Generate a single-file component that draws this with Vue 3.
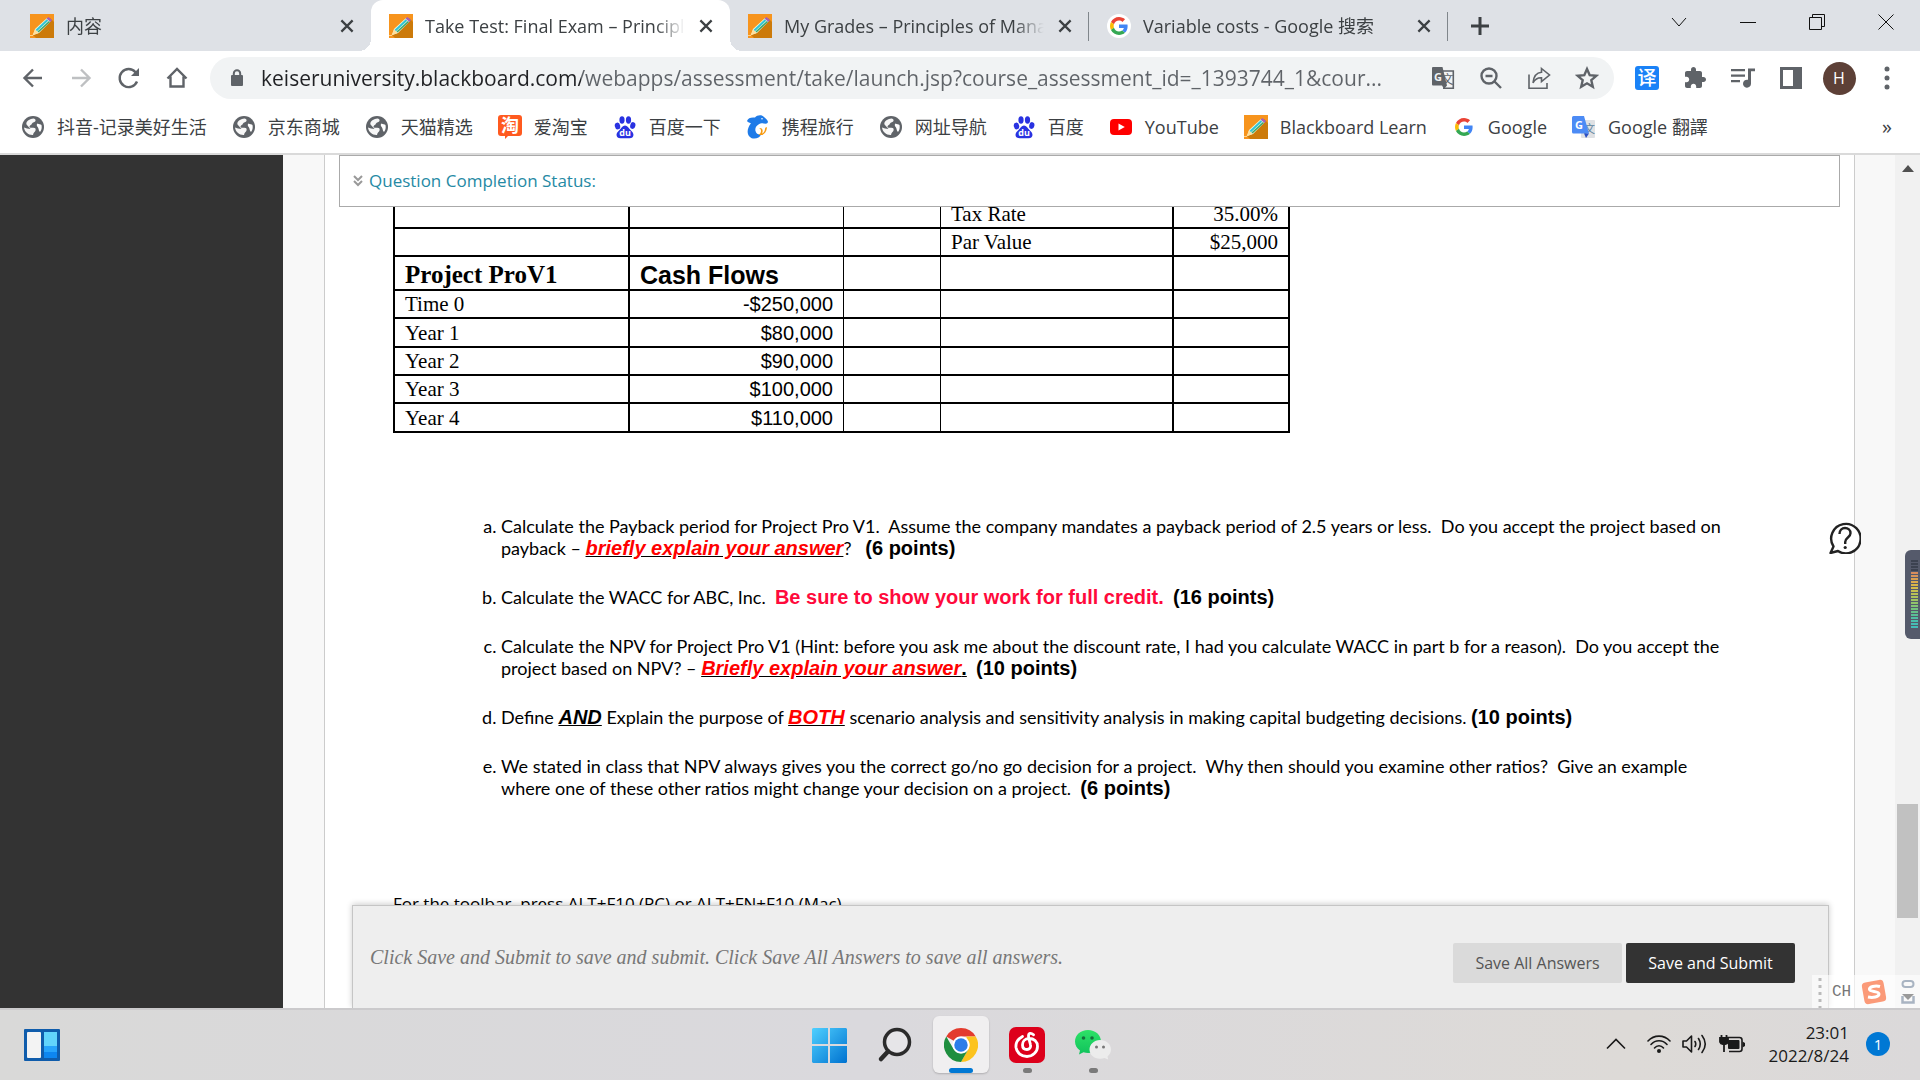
<script setup>
import { ref } from 'vue'

const address = ref(
  'keiseruniversity.blackboard.com/webapps/assessment/take/launch.jsp?course_assessment_id=_1393744_1&cour...'
)

const tabs = [
  { icon: 'pencil', title: '内容', active: false },
  { icon: 'pencil', title: 'Take Test: Final Exam – Principles', active: true },
  { icon: 'pencil', title: 'My Grades – Principles of Managerial', active: false, divider: true },
  { icon: 'google', disc: true, title: 'Variable costs - Google 搜索', active: false, divider: true },
]

const bookmarks = [
  { icon: 'globe', title: '抖音-记录美好生活' },
  { icon: 'globe', title: '京东商城' },
  { icon: 'globe', title: '天猫精选' },
  { icon: 'taobao', title: '爱淘宝' },
  { icon: 'baidu', title: '百度一下' },
  { icon: 'ctrip', title: '携程旅行' },
  { icon: 'globe', title: '网址导航' },
  { icon: 'baidu', title: '百度' },
  { icon: 'youtube', title: 'YouTube' },
  { icon: 'pencil', title: 'Blackboard Learn' },
  { icon: 'google', title: 'Google' },
  { icon: 'translate', title: 'Google 翻譯' },
]

const years = [
  { label: 'Time 0', flow: '-$250,000' },
  { label: 'Year 1', flow: '$80,000', tall: true },
  { label: 'Year 2', flow: '$90,000' },
  { label: 'Year 3', flow: '$100,000' },
  { label: 'Year 4', flow: '$110,000', tall: true },
]

const meterColors = [
  '#3c4250', '#3c4250', '#3c4250', '#3c4250', '#d88d5c', '#d8955a', '#d9a052', '#dbab4c',
  '#d8b548', '#d3bc4a', '#c6bf50', '#b9c156', '#adc25c', '#a0c363', '#92c36b', '#83c374',
  '#74c27e', '#66c189', '#5ac095', '#50bfa2', '#4abeac', '#46bdb4', '#44bcb8',
]
</script>

<template>
  <svg class="sprite" aria-hidden="true">
    <symbol id="pencil" viewBox="0 0 24 24">
      <rect width="24" height="24" fill="#f7941d" />
      <path d="M20 4L24 8V24H6L3 21z" fill="#cc7a0a" />
      <path d="M3 21L5 15L17 4L21 7L9 19z" fill="#e9f7e0" />
      <path d="M6.300 16.500L17.500 6" stroke="#2fc4d8" stroke-width="2" />
      <path d="M8 18L19.500 7.500" stroke="#3fa66b" stroke-width="1.600" />
      <path d="M16.500 4.500L18.500 3L22 6L20.500 8z" fill="#a561b8" />
      <path d="M2.500 21.500L5 15.500L8.500 19z" fill="#ffdf9c" />
      <path d="M0 21.500H3" stroke="#ffd38a" />
    </symbol>
    <symbol id="google" viewBox="0 0 48 48">
      <path fill="#EA4335" d="M24 9.500c3.540 0 6.710 1.220 9.210 3.600l6.850-6.850C35.900 2.380 30.470 0 24 0 14.620 0 6.510 5.380 2.560 13.220l7.980 6.190C12.430 13.720 17.740 9.500 24 9.500z" />
      <path fill="#4285F4" d="M46.980 24.550c0-1.570-.15-3.090-.38-4.550H24v9.020h12.940c-.58 2.960-2.260 5.480-4.780 7.180l7.730 6c4.510-4.180 7.090-10.360 7.090-17.650z" />
      <path fill="#FBBC05" d="M10.530 28.590c-.48-1.450-.76-2.990-.76-4.590s.27-3.140.76-4.590l-7.980-6.190C.92 16.460 0 20.120 0 24c0 3.880.92 7.540 2.560 10.780l7.970-6.190z" />
      <path fill="#34A853" d="M24 48c6.480 0 11.930-2.130 15.890-5.810l-7.730-6c-2.150 1.450-4.920 2.300-8.160 2.300-6.260 0-11.570-4.220-13.470-9.910l-7.980 6.190C6.510 42.620 14.620 48 24 48z" />
    </symbol>
    <symbol id="globe" viewBox="0 0 24 24">
      <circle cx="12" cy="12" r="11" fill="#5f6368" />
      <path d="M10 4c3-1.500 5 0 4.500 2-.5 1.600-3 1-3.500 2.500s-2 1.500-2.500 3c-.2 1.200 1 1.500 3 1.300 3-.3 3.500 1 3 2.700-.4 1.500-2 1.700-2.500 4.500-4.500.3-8.500-3-9-7.500L6 13.500 9.500 14 5.500 9.500C4.800 7 7 5 10 4z" fill="#fff" opacity=".95" />
      <path d="M16.500 8.500c1.500.8 3 .5 4 1.500.6 3 0 5-1.500 7-1.500-1-1-3-2-4.500s-2-2.500-.5-4z" fill="#fff" />
    </symbol>
    <symbol id="taobao" viewBox="0 0 24 24">
      <path d="M3 0H21a3 3 0 0 1 3 3V18a3 3 0 0 1-3 3H10L7 24V21H3a3 3 0 0 1-3-3V3a3 3 0 0 1 3-3z" fill="#ff5a1f" />
      <text x="12" y="17" text-anchor="middle" class="cjk-glyph" font-size="18" font-weight="700" fill="#fff">淘</text>
    </symbol>
    <symbol id="baidu" viewBox="0 0 24 24">
      <g fill="#2932e1">
        <ellipse cx="4.500" cy="11" rx="2.700" ry="3.400" transform="rotate(-12 4.500 11)" />
        <ellipse cx="9" cy="5" rx="2.600" ry="3.700" />
        <ellipse cx="15.500" cy="5" rx="2.600" ry="3.700" />
        <ellipse cx="19.800" cy="10.500" rx="2.600" ry="3.400" transform="rotate(12 19.800 10.500)" />
        <path d="M12 10.500c2.500 0 3.500 2.500 5.500 4.500s3.500 3.500 2.800 6c-.7 2.600-4 2.300-8.300 2.300s-7.600.3-8.300-2.300c-.7-2.500.8-4 2.800-6s3-4.500 5.500-4.500z" />
      </g>
      <text x="12" y="21" text-anchor="middle" class="latin-glyph" font-size="9" font-weight="700" fill="#fff">du</text>
    </symbol>
    <symbol id="ctrip" viewBox="0 0 24 24">
      <path d="M1 6C2 3 5 2 9 2.500 11 0 16-.5 18 2c2.500 2.500 5 4 3.500 6-1.500 1.700-4 0-6 .3C12 9 8.500 12 9.500 16c.6 2.600 3 4 5.500 3.500-1 3-4.500 4.500-8 4C2 22.500.5 17 2.500 12.500 3 11 4 9.500 5 8.500 4 7.500 2 7.500 1 6z" fill="#1f7be8" />
      <path d="M13 13c3 1 2.500 5.500-.5 6.500 3.500 2 8-1 8.500-7-1-.5-1.800.2-2 1.500-.2 2.500-1.500 4-3 4.500 1.500-3 .5-6-3-5.500z" fill="#f79a10" />
      <circle cx="16" cy="3.800" r=".8" fill="#fff" />
    </symbol>
    <symbol id="youtube" viewBox="0 0 24 24">
      <rect x="1" y="4" width="22" height="16" rx="4" fill="#f00" />
      <path d="M9.500 8.500V15.500L15.800 12z" fill="#fff" />
    </symbol>
    <symbol id="translate" viewBox="0 0 24 24">
      <rect x="9" y="5" width="14" height="18" rx="1" fill="#dfe1e4" />
      <text x="17.500" y="18" text-anchor="middle" class="cjk-glyph" font-size="11" fill="#5b7f9c">文</text>
      <path d="M1.500 1H12l5 17.500H1.500A1.500 1.500 0 0 1 0 17V2.500A1.500 1.500 0 0 1 1.500 1z" fill="#4c8bf5" />
      <path d="M12 18.500H17L14 23z" fill="#2a4fc4" />
      <text x="7" y="14" text-anchor="middle" class="latin-glyph" font-size="11" font-weight="700" fill="#fff">G</text>
    </symbol>
    <symbol id="close" viewBox="0 0 16 16">
      <path d="M3 3L13 13M13 3L3 13" stroke="#3c4043" stroke-width="2" fill="none" />
    </symbol>
  </svg>

  <div class="screen">
    <header class="browser">
      <div class="tabstrip">
        <div class="tabs" role="tablist">
          <div v-for="t in tabs" :key="t.title" class="tab" :class="{ active: t.active, divided: t.divider }" role="tab" :aria-selected="t.active">
            <span class="favicon" :class="{ disc: t.disc }"><svg><use :href="'#' + t.icon" /></svg></span>
            <span class="tab-title">{{ t.title }}</span>
            <button class="tab-close" aria-label="Close tab"><svg><use href="#close" /></svg></button>
          </div>
        </div>
        <button class="new-tab" aria-label="New tab">
          <svg width="20" height="20" viewBox="0 0 20 20"><path d="M10 1V19M1 10H19" stroke="#3c4043" stroke-width="3" /></svg>
        </button>
        <div class="window-controls">
          <button aria-label="Search tabs"><svg width="16" height="16" viewBox="0 0 16 16"><path d="M1 4L8 12L15 4" /></svg></button>
          <button aria-label="Minimize"><svg width="16" height="16" viewBox="0 0 16 16"><path d="M0 8.500H16" /></svg></button>
          <button aria-label="Restore"><svg width="16" height="16" viewBox="0 0 16 16"><path d="M.5 3.500H12.500V15.500H.5zM3.500 3.500V.5H15.500V12.500H12.500" /></svg></button>
          <button aria-label="Close"><svg width="16" height="16" viewBox="0 0 16 16"><path d="M.5 .5L15.500 15.500M15.500 .5L.5 15.500" /></svg></button>
        </div>
      </div>

      <div class="toolbar">
        <button class="tool" aria-label="Back"><svg viewBox="0 0 24 24"><path class="line" d="M21 12H4M12 3.500L3.500 12L12 20.500" /></svg></button>
        <button class="tool dim" aria-label="Forward"><svg viewBox="0 0 24 24"><path class="line" d="M3 12H20M12 3.500L20.500 12L12 20.500" /></svg></button>
        <button class="tool" aria-label="Reload"><svg viewBox="0 0 24 24"><path class="line" d="M20 15.500A9 9 0 1 1 18.500 6.200L20.500 8.500" /><path d="M22 2V10H14z" /></svg></button>
        <button class="tool" aria-label="Home"><svg viewBox="0 0 24 24"><path class="line" d="M2.500 12.500L12 3L21.500 12.500M5.500 10.500V20.500H18.500V10.500" /></svg></button>
        <form class="omnibox" @submit.prevent>
          <svg class="lock" width="14" height="18" viewBox="0 0 14 18"><rect x="1" y="6" width="12" height="11" rx="1" fill="#5f6368" /><path d="M3.800 6.500V4.500a3.200 3.200 0 0 1 6.400 0V6.500" fill="none" stroke="#5f6368" stroke-width="2" /></svg>
          <input v-model="address" class="address" type="text" aria-label="Address" spellcheck="false">
          <button type="button" class="tool" aria-label="Translate this page">
            <svg viewBox="0 0 24 24"><path class="thin" d="M12 5H22.300V22.300H12" /><text x="16.500" y="18" text-anchor="middle" class="cjk-glyph" font-size="12">文</text><path d="M2 1H11.500L16 19.500H2A1 1 0 0 1 1 18.500V2A1 1 0 0 1 2 1zM11 19.500H16L13 23z" /><text x="7" y="14.500" text-anchor="middle" class="latin-glyph" font-size="11" font-weight="700" fill="#f1f3f4">G</text></svg>
          </button>
          <button type="button" class="tool" aria-label="Zoom"><svg viewBox="0 0 24 24"><circle class="line" cx="10" cy="10" r="7.500" /><path class="line" d="M15.500 15.500L22 22M6.500 10H13.500" /></svg></button>
          <button type="button" class="tool" aria-label="Share"><svg viewBox="0 0 24 24"><path class="thin" d="M2 8.500V22.300H20V17M14.500 2.500L22.500 9L14.500 15.500V11.800C10.500 11.500 8 13.500 6 16.800 6.500 11.500 9 6.800 14.500 6.300z" /></svg></button>
          <button type="button" class="tool" aria-label="Bookmark"><svg viewBox="0 0 24 24"><path class="line" d="M12 3L14.700 9.200L21.300 9.800L16.300 14.200L17.800 20.800L12 17.300L6.200 20.800L7.700 14.200L2.700 9.800L9.300 9.200z" /></svg></button>
        </form>
        <button class="tool ext" aria-label="Translator extension"><svg viewBox="0 0 24 24"><rect width="24" height="24" rx="3" fill="#1a82f7" /><text x="12" y="19" text-anchor="middle" class="cjk-glyph" font-size="19" font-weight="500" fill="#fff">译</text></svg></button>
        <button class="tool" aria-label="Extensions"><svg viewBox="0 0 24 24"><path d="M20.500 11H19V7c0-1.100-.9-2-2-2h-4V3.500C13 2.120 11.880 1 10.500 1S8 2.120 8 3.500V5H4c-1.100 0-1.990.9-1.990 2v3.800H3.500c1.490 0 2.700 1.210 2.700 2.700s-1.210 2.700-2.700 2.700H2V20c0 1.100.9 2 2 2h3.800v-1.500c0-1.490 1.210-2.700 2.700-2.700 1.490 0 2.700 1.210 2.700 2.700V22H17c1.100 0 2-.9 2-2v-4h1.500c1.380 0 2.500-1.120 2.500-2.500S21.880 11 20.500 11z" /></svg></button>
        <button class="tool" aria-label="Media"><svg viewBox="0 0 24 24"><path d="M0 3H14V5.300H0zM0 8.500H14V10.800H0zM0 14H9V16.300H0zM17 2.500H24V5.300H20V17.500A4 4 0 1 1 17 13.800z" /></svg></button>
        <button class="tool" aria-label="Side panel"><svg viewBox="0 0 24 24"><path fill-rule="evenodd" d="M1 1H23V23H1zM4 4V20H14V4z" /></svg></button>
        <button class="tool" aria-label="Profile"><span class="avatar">H</span></button>
        <button class="tool" aria-label="Menu"><svg viewBox="0 0 24 24"><circle cx="12" cy="3" r="2.500" /><circle cx="12" cy="12" r="2.500" /><circle cx="12" cy="21" r="2.500" /></svg></button>
      </div>

      <nav class="bookmarks">
        <a v-for="(b, i) in bookmarks" :key="i" href="#" class="bookmark" :class="b.icon">
          <svg><use :href="'#' + b.icon" /></svg>{{ b.title }}
        </a>
        <button class="more" aria-label="More bookmarks">»</button>
      </nav>
    </header>

    <div class="viewport">
      <div class="rail"></div>
      <main class="page">
        <div class="sheet">
          <section class="status">
            <button class="status-toggle">
              <svg width="10" height="12" viewBox="0 0 10 12"><path d="M1 1L5 5L9 1M1 6L5 10L9 6" fill="none" stroke="#999" stroke-width="2" /></svg>
              Question Completion Status:
            </button>
          </section>

          <div class="question">
            <table class="data">
              <colgroup><col class="c1"><col class="c2"><col class="c3"><col class="c4"><col class="c5"></colgroup>
              <tbody>
                <tr><td></td><td></td><td></td><td>Tax Rate</td><td class="num">35.00%</td></tr>
                <tr><td></td><td></td><td></td><td>Par Value</td><td class="num">$25,000</td></tr>
                <tr class="head"><th scope="col">Project ProV1</th><th scope="col" class="sans">Cash Flows</th><td></td><td></td><td></td></tr>
                <tr v-for="y in years" :key="y.label" :class="{ tall: y.tall }">
                  <td>{{ y.label }}</td><td class="num sans">{{ y.flow }}</td><td></td><td></td><td></td>
                </tr>
              </tbody>
            </table>

            <ol class="parts">
              <li>Calculate the Payback period for Project Pro V1.&nbsp; Assume the company mandates a payback period of 2.5 years or less.&nbsp; Do you accept the project based on<br>payback – <u><em>briefly explain your answer</em></u>?&nbsp;&nbsp; <strong>(6 points)</strong></li>
              <li>Calculate the WACC for ABC, Inc.&nbsp; <strong class="credit">Be sure to show your work for full credit.</strong>&nbsp; <strong>(16 points)</strong></li>
              <li>Calculate the NPV for Project Pro V1 (Hint: before you ask me about the discount rate, I had you calculate WACC in part b for a reason).&nbsp; Do you accept the<br>project based on NPV? – <u><em>Briefly explain your answer</em><strong>.</strong></u>&nbsp; <strong>(10 points)</strong></li>
              <li>Define <u><em class="dark">AND</em></u> Explain the purpose of <u><em>BOTH</em></u> scenario analysis and sensitivity analysis in making capital budgeting decisions. <strong>(10 points)</strong></li>
              <li>We stated in class that NPV always gives you the correct go/no go decision for a project.&nbsp; Why then should you examine other ratios?&nbsp; Give an example<br>where one of these other ratios might change your decision on a project.&nbsp; <strong>(6 points)</strong></li>
            </ol>

            <p class="hint">For the toolbar, press ALT+F10 (PC) or ALT+FN+F10 (Mac).</p>
          </div>

          <section class="submit-bar">
            <p>Click Save and Submit to save and submit. Click Save All Answers to save all answers.</p>
            <div class="actions">
              <button class="save">Save All Answers</button>
              <button class="submit">Save and Submit</button>
            </div>
          </section>
        </div>
      </main>
      <div class="scrollbar">
        <svg class="arrow" width="12" height="7" viewBox="0 0 12 7"><path d="M0 7L6 0L12 7z" fill="#505050" /></svg>
        <div class="thumb"></div>
      </div>

      <button class="help" aria-label="Help">
        <svg width="32" height="32" viewBox="0 0 32 32"><path d="M4.500 24.500A14.700 14.700 0 1 1 9 29L1.500 31z" fill="#fff" stroke="#222" stroke-width="2.400" stroke-linejoin="round" /><path d="M10.500 12C10.500 8 13 6 16 6s5.500 2 5.500 5.200C21.500 15.500 16.200 15.500 16.200 20V22" fill="none" stroke="#222" stroke-width="2.400" /><circle cx="16.200" cy="25.500" r="1.600" fill="#222" /></svg>
      </button>
      <div class="meter"><i v-for="(c, i) in meterColors" :key="i" :style="{ background: c }"></i></div>
      <div class="ime">
        <svg width="4" height="32" viewBox="0 0 4 32"><path d="M2 2V32" stroke="#bbb" stroke-width="3" stroke-dasharray="3 4" /></svg>
        <span>CH</span>
        <svg width="26" height="26" viewBox="0 0 26 26"><rect x="2" y="2" width="22" height="22" rx="4" fill="#fb9a78" transform="rotate(-10 13 13)" /><path d="M19 7.500C14 6 8 8 8.500 10.500S18 12 18 15 12 19 7 18" fill="none" stroke="#fff" stroke-width="3" /></svg>
        <svg class="keys" width="14" height="26" viewBox="0 0 14 26"><rect x="1.500" y="2" width="11" height="6" rx="3" fill="none" stroke="#a9b4c2" stroke-width="2" /><path d="M1.500 17V23.500H12.500V17" fill="none" stroke="#a9b4c2" stroke-width="2.500" /><path d="M1 15H13L7 21z" fill="#999" /></svg>
      </div>
    </div>

    <footer class="taskbar">
      <button class="widgets" aria-label="Widgets">
        <svg width="36" height="32" viewBox="0 0 36 32"><rect width="36" height="32" rx="1" fill="#0f5cab" /><rect x="3" y="3" width="14" height="26" rx="1" fill="#f3f3f3" /><path d="M20 3H33V17H20z" fill="#62d4fb" /><path d="M20 17H33V23H20z" fill="#27a4fb" /><path d="M20 23H33V29H20z" fill="#0d86f0" /></svg>
      </button>
      <div class="apps">
        <button class="app" aria-label="Start">
          <svg width="36" height="36" viewBox="0 0 36 36">
            <defs><linearGradient id="winGrad" x1="0" y1="0" x2="1" y2="1"><stop offset="0" stop-color="#4fd0ff" /><stop offset="1" stop-color="#0072d0" /></linearGradient></defs>
            <path d="M2 1H17V17H1V2zM19 1H35L36 2V17H19zM1 19H17V36H2L1 35zM19 19H36V35L35 36H19z" fill="url(#winGrad)" />
          </svg>
        </button>
        <button class="app" aria-label="Search"><svg width="36" height="36" viewBox="0 0 36 36"><circle cx="20" cy="15" r="12.500" fill="#e6e5e8" stroke="#2b2b2b" stroke-width="3.500" /><path d="M11 24.500L4 32" stroke="#2b2b2b" stroke-width="4.500" stroke-linecap="round" /></svg></button>
        <button class="app open" aria-label="Chrome">
          <svg width="34" height="34" viewBox="0 0 48 48"><path d="M24 0A24 24 0 0 1 44.800 12H24A12 12 0 0 0 13.600 18L3.200 12A24 24 0 0 1 24 0z" fill="#e33b2e" /><path d="M44.800 12A24 24 0 0 1 24 48L34.400 30A12 12 0 0 0 34.400 18L31 12z" fill="#fcc31e" /><path d="M3.200 12A24 24 0 0 0 24 48L34.400 30A12 12 0 0 1 13.600 30z" fill="#1e8e3e" /><circle cx="24" cy="24" r="12" fill="#fff" /><circle cx="24" cy="24" r="9.500" fill="#2b7de9" /></svg>
        </button>
        <button class="app running" aria-label="Music">
          <svg width="36" height="36" viewBox="0 0 36 36"><rect width="36" height="36" rx="7" fill="#dd001b" /><path d="M13.500 9.500C9 12 6.500 16 7 20.500 7.800 26 12.500 29.500 18 29.500S28.500 25 28.500 19.500C28.500 14.500 25 11.500 20 11.500 15.500 11.500 13.500 15 13.500 18S15.500 22.500 18 22.500 22 20.500 21.500 18C21 15 19.500 12 19.500 9S22 5.500 24.500 7.800" fill="none" stroke="#fff" stroke-width="2.800" stroke-linecap="round" /></svg>
        </button>
        <button class="app running" aria-label="Chat">
          <svg width="38" height="36" viewBox="0 0 38 36">
            <defs><linearGradient id="chatGrad" x1="0" y1="0" x2="0" y2="1"><stop offset="0" stop-color="#2ee267" /><stop offset="1" stop-color="#10c25c" /></linearGradient></defs>
            <path d="M14 3C21.500 3 27 8 27 14.500S21.500 26 14 26C12.500 26 11 25.800 9.500 25.300L5 27.500 6 23.500C3 21.500 1 18.500 1 14.500 1 8 6.500 3 14 3z" fill="url(#chatGrad)" /><path d="M26 13C32 13 37 17 37 22.500 37 25.500 35.500 27.800 33.500 29.500L34.200 32.500 30.500 31C29 31.500 27.600 31.800 26 31.800 20 31.800 15.500 27.500 15.500 22.500S20 13 26 13z" fill="#ececec" /><circle cx="9.500" cy="11" r="1.800" fill="#15713c" /><circle cx="18" cy="11" r="1.800" fill="#15713c" /><circle cx="22.500" cy="20" r="1.500" fill="#777" /><circle cx="29.500" cy="20" r="1.500" fill="#777" />
          </svg>
        </button>
      </div>
      <div class="tray">
        <svg class="up" width="20" height="12" viewBox="0 0 20 12"><path d="M1 10.500L10 1.500L19 10.500" fill="none" stroke="#1a1a1a" stroke-width="1.600" /></svg>
        <svg width="24" height="20" viewBox="0 0 24 20"><g fill="none" stroke="#1a1a1a" stroke-width="1.600" stroke-linecap="round"><path d="M1 7C7 .5 17 .5 23 7" /><path d="M4 10.500C8.500 5.500 15.500 5.500 20 10.500" /><path d="M7.500 14C10 11 14 11 16.500 14" /></g><circle cx="12" cy="17" r="2" fill="#1a1a1a" /></svg>
        <svg width="26" height="20" viewBox="0 0 26 20"><g fill="none" stroke="#1a1a1a" stroke-width="1.600" stroke-linecap="round" stroke-linejoin="round"><path d="M1 7H4.500L9.500 2V18L4.500 13H1z" /><path d="M13 7.500Q14.500 10 13 12.500M16.500 4.500Q20 10 16.500 15.500M20 1.500Q26.500 10 20 18.500" /></g></svg>
        <svg width="26" height="20" viewBox="0 0 26 20"><path d="M8 3.500H20.500A2.500 2.500 0 0 1 23 6V15A2.500 2.500 0 0 1 20.500 17.500H10" fill="none" stroke="#1a1a1a" stroke-width="1.600" /><rect x="9" y="6" width="11.500" height="9" rx="1" fill="#1a1a1a" /><path d="M23.500 7.500L26 9V12L23.500 13.500z" fill="#1a1a1a" /><path d="M1 4H9V8A3 3 0 0 1 6 10H4A3 3 0 0 1 1 8zM2.500 1V4M7.500 1V4M5 10V18" fill="#1a1a1a" stroke="#1a1a1a" stroke-width="1.800" /></svg>
        <div class="clock"><time>23:01</time><time>2022/8/24</time></div>
        <span class="badge">1</span>
      </div>
    </footer>
  </div>
</template>

<style>
body {
  margin: 0;
  overflow: hidden;
}
</style>

<style scoped>
.screen {
  display: flex;
  flex-direction: column;
  height: 100vh;
  font-family: 'Open Sans', 'Noto Sans CJK SC', sans-serif;
  background: #fff;
}
button {
  padding: 0;
  border: 0;
  background: none;
  font: inherit;
  color: inherit;
}
svg {
  display: block;
  flex: none;
}
svg.sprite {
  display: none;
}
.cjk-glyph {
  font-family: 'Noto Sans CJK SC', sans-serif;
}
.latin-glyph {
  font-family: 'Open Sans', sans-serif;
}

/* Browser frame */
.browser {
  flex: none;
  border-bottom: 2px solid #dadada;
  color: #3c4043;
}
.tabstrip {
  display: flex;
  height: 51px;
  padding-left: 12px;
  background: #dee1e6;
}
.tabs {
  display: flex;
}
.tab {
  box-sizing: border-box;
  position: relative;
  display: flex;
  align-items: center;
  width: 359px;
  padding: 0 15px 0 18px;
  font-size: 18px;
}
.tab.divided::after {
  content: '';
  position: absolute;
  right: 0;
  top: 12px;
  width: 1px;
  height: 29px;
  background: #80868b;
}
.tab.active {
  background: #fff;
  border-radius: 12px 12px 0 0;
}
.tab.active::before,
.tab.active::after {
  content: '';
  position: absolute;
  bottom: 0;
  width: 12px;
  height: 12px;
}
.tab.active::before {
  left: -12px;
  background: radial-gradient(circle at 0 0, transparent 12px, #fff 12px);
}
.tab.active::after {
  right: -12px;
  background: radial-gradient(circle at 100% 0, transparent 12px, #fff 12px);
}
.favicon {
  flex: none;
  display: grid;
  place-items: center;
  width: 24px;
  height: 24px;
}
.favicon svg {
  width: 24px;
  height: 24px;
}
.favicon.disc {
  border-radius: 50%;
  background: #fff;
}
.favicon.disc svg {
  width: 18px;
  height: 18px;
}
.tab-title {
  flex: 1;
  margin: 0 12px;
  overflow: hidden;
  white-space: nowrap;
  line-height: 28px;
  mask-image: linear-gradient(90deg, #000 calc(100% - 30px), transparent);
}
.tab-close svg {
  width: 18px;
  height: 18px;
}
.new-tab {
  margin-left: 22px;
}
.window-controls {
  display: flex;
  height: 44px;
  margin-left: auto;
}
.window-controls button {
  display: grid;
  place-items: center;
  width: 69px;
}
.window-controls path {
  fill: none;
  stroke: #111;
}
.toolbar {
  display: flex;
  align-items: center;
  height: 54px;
  padding: 0 9px;
}
.tool {
  flex: none;
  display: grid;
  place-items: center;
  width: 48px;
  height: 42px;
}
.tool svg {
  width: 24px;
  height: 24px;
  fill: #5f6368;
}
.tool .line,
.tool .thin {
  fill: none;
  stroke: #5f6368;
  stroke-width: 2.4;
}
.tool .thin {
  stroke-width: 1.6;
}
.tool.dim {
  opacity: 0.4;
}
.omnibox {
  flex: 1;
  display: flex;
  align-items: center;
  height: 42px;
  margin: 0 9px;
  padding: 0 3px 0 20px;
  border-radius: 21px;
  background: #f1f3f4;
}
.lock {
  margin-right: 17px;
}
.address {
  flex: 1;
  min-width: 0;
  padding: 0;
  border: 0;
  outline: 0;
  font-family: inherit;
  font-size: 21px;
  line-height: 30px;
  color: transparent;
  background: linear-gradient(90deg, #202124 320px, #5f6368 320px) text;
}
.avatar {
  display: grid;
  place-items: center;
  width: 33px;
  height: 33px;
  border-radius: 50%;
  background: #5d4037;
  color: #fff;
  font-size: 16px;
}
.bookmarks {
  box-sizing: border-box;
  display: flex;
  align-items: center;
  gap: 25px;
  height: 48px;
  padding: 0 28px 4px 21px;
}
.bookmark {
  display: flex;
  align-items: center;
  gap: 12px;
  font-size: 18px;
  line-height: 28px;
  white-space: nowrap;
  color: #3c4043;
  text-decoration: none;
}
.bookmark svg {
  width: 24px;
  height: 24px;
}
.bookmark.google svg {
  width: 18px;
  height: 18px;
  padding: 3px;
}
.more {
  margin-left: auto;
  font-size: 20px;
  line-height: 28px;
}

/* Page */
.viewport {
  position: relative;
  flex: 1;
  min-height: 0;
  display: flex;
  overflow: hidden;
}
.rail {
  flex: none;
  width: 283px;
  background: #333;
}
.page {
  flex: 1;
  min-width: 0;
  padding: 0 40px 0 41px;
  background: #f8f8f8;
}
.sheet {
  box-sizing: border-box;
  display: flex;
  flex-direction: column;
  height: 100%;
  padding: 0 14px;
  border: solid #ccc;
  border-width: 0 1px;
  background: #fff;
}
.status {
  box-sizing: border-box;
  flex: none;
  height: 52px;
  padding: 0 13px;
  border: 1px solid #aaa;
  display: flex;
  align-items: center;
}
.status-toggle {
  display: flex;
  align-items: center;
  gap: 6px;
  font-size: 17px;
  line-height: 24px;
  color: #2589a4;
}
.question {
  flex: 1;
  min-height: 0;
  overflow: hidden;
  display: flex;
  flex-direction: column;
  padding-left: 54px;
}
.data {
  flex: none;
  align-self: flex-start;
  width: 897px;
  table-layout: fixed;
  border-spacing: 0;
  border-left: 2px solid #000;
  margin-top: -6px;
  font: 21px/24px 'Liberation Serif', serif;
}
.c1 { width: 235px; }
.c2 { width: 214px; }
.c3 { width: 97px; }
.c4 { width: 233px; }
.c5 { width: 116px; }
.data td,
.data th {
  box-sizing: border-box;
  height: 28px;
  padding: 0 10px;
  border: solid #000;
  border-width: 0 2px 2px 0;
  text-align: left;
  white-space: nowrap;
}
.data td:nth-child(2),
.data th:nth-child(2),
.data td:nth-child(3) {
  border-right-width: 1px;
}
.data .head > * {
  height: 34px;
  padding-top: 4px;
  font-size: 25px;
}
.data .tall td {
  height: 29px;
}
.data .num {
  text-align: right;
}
.data .sans {
  font-family: 'Liberation Sans', sans-serif;
}
.data td.num.sans {
  font-size: 20px;
}
.parts {
  flex: none;
  display: flex;
  flex-direction: column;
  gap: 27px;
  margin: 82px 0 0;
  padding-left: 108px;
  list-style: lower-alpha;
  font: 18px/22px Lato, sans-serif;
  white-space: nowrap;
}
.parts strong,
.parts em {
  font: bold 20px/20px 'Liberation Sans', sans-serif;
}
.parts em {
  font-style: italic;
  color: #f00;
}
.parts em.dark {
  color: #000;
}
.parts .credit {
  color: #ff0a3c;
}
.hint {
  flex: none;
  margin: 93px 0 0;
  font-size: 17px;
  line-height: 24px;
}
.submit-bar {
  flex: none;
  box-sizing: border-box;
  position: relative;
  display: flex;
  justify-content: space-between;
  align-items: center;
  height: 103px;
  margin: 0 11px 0 13px;
  padding: 0 33px 0 17px;
  border: solid #c5c5c5;
  border-width: 1px 1px 0;
  background: #eee;
  box-shadow: 0 -1px 6px rgba(0, 0, 0, 0.2);
}
.submit-bar p {
  margin: 0;
  font: italic 20px/24px 'Liberation Serif', serif;
  color: #777;
}
.actions {
  display: flex;
  gap: 4px;
  padding-top: 12px;
}
.actions button {
  width: 169px;
  height: 40px;
  border-radius: 2px;
  background: #dadada;
  color: #555;
  font-size: 16px;
}
.actions .submit {
  background: #333;
  color: #fff;
}
.scrollbar {
  flex: none;
  display: flex;
  flex-direction: column;
  align-items: center;
  width: 25px;
  background: #f1f1f1;
}
.arrow {
  margin-top: 10px;
}
.thumb {
  width: 21px;
  height: 114px;
  margin-top: 632px;
  background: #c1c1c1;
}
.help {
  position: absolute;
  right: 59px;
  top: 367px;
}
.meter {
  position: absolute;
  right: 0;
  top: 395px;
  box-sizing: border-box;
  width: 15px;
  height: 89px;
  padding: 10px 2px 0 6px;
  border-radius: 6px 0 0 6px;
  background: #555a6b;
  display: flex;
  flex-direction: column;
  gap: 1px;
}
.meter i {
  height: 2px;
}
.ime {
  position: absolute;
  right: 0;
  bottom: 0;
  box-sizing: border-box;
  display: flex;
  align-items: center;
  width: 108px;
  height: 33px;
  padding: 0 5px 0 6px;
  background: rgba(255, 255, 255, 0.6);
  font: 16px/24px 'Liberation Mono', monospace;
  color: #777;
}
.ime span {
  margin: 0 10px;
}
.keys {
  margin-left: auto;
}

/* Taskbar */
.taskbar {
  flex: none;
  box-sizing: border-box;
  position: relative;
  display: flex;
  align-items: center;
  justify-content: space-between;
  height: 72px;
  padding: 0 30px 0 24px;
  border-top: 2px solid #cbcacc;
  background: linear-gradient(90deg, #d9d9d8, #dad9dd 45%, #dddad7 85%, #dbd9da);
}
.apps {
  position: absolute;
  left: 50%;
  top: 6px;
  display: flex;
  gap: 10px;
  margin-left: -159px;
}
.app {
  position: relative;
  display: grid;
  place-items: center;
  width: 56px;
  height: 57px;
  border-radius: 6px;
}
.app.open {
  background: #f0eff0;
  box-shadow: 0 1px 2px rgba(0, 0, 0, 0.2);
}
.app.open::after,
.app.running::after {
  content: '';
  position: absolute;
  bottom: 0;
  left: 50%;
  width: 9px;
  height: 5px;
  margin-left: -4px;
  border-radius: 3px;
  background: #7a7a7a;
}
.app.open::after {
  width: 24px;
  margin-left: -12px;
  background: #0078d4;
}
.tray {
  display: flex;
  align-items: center;
  gap: 11px;
  padding-bottom: 2px;
  color: #1a1a1a;
}
.up {
  margin-right: 10px;
}
.clock {
  display: flex;
  flex-direction: column;
  width: 93px;
  text-align: right;
  font-size: 17px;
  line-height: 23px;
}
.badge {
  display: grid;
  place-items: center;
  width: 24px;
  height: 24px;
  margin-left: 6px;
  border-radius: 50%;
  background: #0078d4;
  color: #fff;
  font-size: 15px;
}
</style>
